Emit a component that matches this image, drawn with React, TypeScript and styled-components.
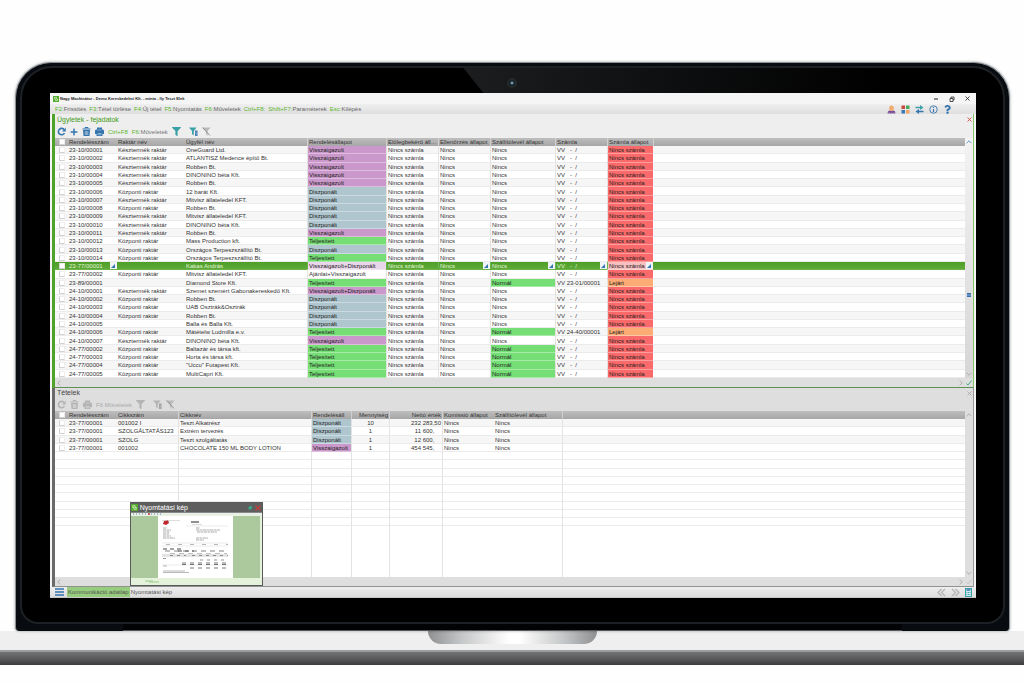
import React from "react";
import styled, { createGlobalStyle, css } from "styled-components";
import { FaPlus, FaFilter, FaQuestion } from "react-icons/fa";

const Global = createGlobalStyle`
  * { box-sizing: border-box; }
  html, body { margin: 0; background: #fefefe; }
  body { font-family: "Liberation Sans", Arial, sans-serif; font-size: 6px; line-height: 8px; color: #333; }
  button { font: inherit; color: inherit; border: 0; padding: 0; margin: 0; background: none; white-space: nowrap; }
  h2, header, footer, nav { margin: 0; }
  svg { display: block; }
`;

const colors = {
  green: "#4aa01e",
  blue: "#3576ae",
  teal: "#3aa0a8",
  grey: "#b4b4b4",
};

const Page = styled.main`
  display: flex;
  flex-direction: column;
  padding-top: 62px;
`;

const Lid = styled.div`
  position: relative;
  margin: 0 14px 0 15px;
  padding: 3px 4px 0;
  background: #080c10;
  border: 1px solid #8d9296;
  border-bottom: 0;
  border-radius: 36px 36px 4px 4px;
  box-shadow: 0 0 3px rgba(0, 0, 0, 0.35);
`;

const Bezel = styled.div`
  position: relative;
  display: flex;
  flex-direction: column;
  background: #000;
  border: 2px solid #1d2125;
  border-radius: 32px 32px 18px 18px;
  padding: 25px 27px 24px 28px;
  overflow: hidden;

  &::before {
    content: "";
    position: absolute;
    inset: 0 12% 0 45%;
    background: linear-gradient(to right, #1b1d1f, #000);
    clip-path: polygon(0 0, 100% 0, 100% 40px, 32px 40px);
  }
`;

const Camera = styled.span`
  position: absolute;
  top: 10px;
  left: 50%;
  width: 10px;
  height: 10px;
  margin-left: -6px;
  border-radius: 50%;
  border: 2px solid #25292c;
  background: radial-gradient(circle, #7690a0 0 1px, #14202a 2px);
`;

const Hinge = styled.div`
  height: 7px;
  margin: 0 103px;
  background: #020304;
  border-bottom: 1px solid #55585a;
`;

const Base = styled.div`
  display: flex;
  flex-direction: column;
  align-items: center;
  height: 34px;
  background: linear-gradient(#efefef 0 19px, #9a9c9e 19px 21px, #717375 21px, #5c5c5e 27px, #3f3b3e 34px);
`;

const Notch = styled.div`
  width: 169px;
  height: 13px;
  border-radius: 0 0 14px 14px;
  background: linear-gradient(to right, #8f9092, #c6c7c8 20%, #fff 48%, #fff 54%, #c6c7c8 80%, #8f9092);
`;

const Screen = styled.div`
  position: relative;
  display: flex;
  flex-direction: column;
  background: #f4f4f4;
  border-bottom: 1px solid #c8c8c8;
`;

const TitleBar = styled.header`
  display: flex;
  align-items: center;
  height: 11px;
  padding: 0 6px 0 3px;
  gap: 1px;
  background: #f5f5f5;
  font-size: 4px;
  font-weight: 700;
  color: #222;
`;

const WindowControls = styled.div`
  display: flex;
  gap: 10px;
  margin-left: auto;
`;

const MenuBar = styled.nav`
  display: flex;
  align-items: center;
  height: 10px;
  padding: 0 24px 0 5px;
  gap: 3px;
  background: linear-gradient(#efefef, #dedede);
  color: #666;
`;

const MenuIcons = styled.div`
  display: flex;
  gap: 5px;
  margin-left: auto;
`;

const Key = styled.span`
  color: #5cb52c;
`;

const Panel = styled.section<{ $active?: boolean }>`
  margin: 0 2px;
  display: flex;
  flex-direction: column;
  background: ${(p) => (p.$active ? "#eeeeee" : "#dedede")};
  border-left: 3px solid ${(p) => (p.$active ? "#4ea42a" : "#6a6a6a")};
  border-right: 1px solid ${(p) => (p.$active ? "#86c468" : "#999")};
  border-bottom: 1px solid ${(p) => (p.$active ? "#5f8f56" : "#8f938f")};
`;

const PanelHead = styled.div<{ $active?: boolean }>`
  display: flex;
  align-items: center;
  justify-content: space-between;
  height: ${(p) => (p.$active ? 11 : 10)}px;
  padding: 0 1px 0 2px;
`;

const PanelTitle = styled.h2<{ $active?: boolean }>`
  font-size: 7px;
  font-weight: 400;
  line-height: 10px;
  color: ${(p) => (p.$active ? "#3f9a16" : "#444")};
`;

const Tools = styled.div<{ $disabled?: boolean }>`
  display: flex;
  align-items: center;
  height: 13px;
  padding-left: 2px;
  gap: 4px;
  color: ${(p) => (p.$disabled ? "#aaa" : "#777")};
`;

const Filters = styled.div`
  display: flex;
  gap: 4px;
`;

const FilterGap = styled.span`
  width: 0;
`;

const GridArea = styled.div`
  display: flex;
`;

const Grid = styled.table<{ $height: number }>`
  flex: 1;
  width: 100%;
  min-width: 0;
  height: ${(p) => p.$height}px;
  table-layout: fixed;
  border-collapse: separate;
  border-spacing: 0;
  background: #fff;

  th {
    height: 8px;
    padding: 0 1px;
    font-weight: 400;
    text-align: left;
    color: #333;
    background: linear-gradient(#bebebe, #a6a6a6);
    white-space: nowrap;
    overflow: hidden;
    text-overflow: ellipsis;
    line-height: 8px;
  }
`;

const Row = styled.tr<{ $selected?: boolean; $striped?: boolean }>`
  background: ${(p) => (p.$selected ? "linear-gradient(#4d9f27, #62ab3b)" : p.$striped ? "#f6f6f6" : "#fff")};
  color: ${(p) => (p.$selected ? "#e2f3d8" : "#333")};
`;

const FillRow = styled.tr`
  height: 49px;
`;

const tones = {
  purple: "#cb98cb",
  blue: "#afc6cf",
  green: "#75df75",
  red: "#fa6a6a",
  orange: "#fdab75",
  lilac: "#ead6ea",
  pink: "#f8c0c0",
};
type Tone = keyof typeof tones;

const Cell = styled.td<{ $tone?: Tone; $line?: boolean; $align?: string; $selected?: boolean; $plain?: boolean }>`
  position: relative;
  padding: 1px 1px 0;
  height: 8px;
  line-height: 6px;
  white-space: nowrap;
  overflow: hidden;
  text-align: ${(p) => p.$align || "left"};
  border-bottom: ${(p) => (p.$plain ? "0" : "1px solid #ebebeb")};
  ${(p) => p.$line && css`border-left: 1px solid #e3e3e3;`}
  ${(p) => p.$selected && css`border-color: #6cb348;`}
  ${(p) => p.$tone && css`
    background: ${tones[p.$tone]};
    color: #222;
    border-bottom: 1px solid rgba(255, 255, 255, 0.35);
  `}
`;

const HeadCell = styled.th<{ $line?: boolean; $right?: boolean }>`
  && {
    text-align: ${(p) => (p.$right ? "right" : "left")};
    ${(p) => p.$line && css`border-left: 1px solid #cfcfcf;`}
  }
`;

const Check = styled.input`
  appearance: none;
  display: block;
  width: 6px;
  height: 6px;
  margin: 0 auto;
  background: #fff;
  border: 1px solid #d2d2d2;
  border-top-color: #eee;
  border-right-color: #eee;
`;

const CornerButton = styled.button`
  position: absolute;
  right: 0;
  top: 0;
  width: 7px;
  height: 8px;
  background: #eef4f8;

  &::after {
    content: "";
    position: absolute;
    right: 2px;
    bottom: 2px;
    border: 2px solid;
    border-color: transparent ${colors.blue} ${colors.blue} transparent;
  }
`;

const VScroll = styled.div<{ $active?: boolean }>`
  display: flex;
  flex: 0 0 8px;
  flex-direction: column;
  align-items: center;
  padding: 1px 0;
  background: ${(p) => (p.$active ? "linear-gradient(#f3f3f3, #d6d6d6)" : "#dedede")};
`;

const Spacer = styled.span<{ $grow: number }>`
  flex: ${(p) => p.$grow};
`;

const Thumb = styled.span`
  width: 4px;
  height: 4px;
  background: #5e92c4;
  border-top: 1px solid #3b6fa5;
  border-bottom: 1px solid #3b6fa5;
`;

const HScroll = styled.div`
  display: flex;
  align-items: center;
  justify-content: space-between;
  height: 9px;
  padding: 0 1px;
  background: #dedede;
`;

const ScrollEnd = styled.div`
  display: flex;
  gap: 2px;
`;

const TaskBar = styled.footer`
  display: flex;
  align-items: center;
  height: 10px;
  padding: 0 4px 0 5px;
  background: linear-gradient(#eeeeee, #dcdcdc);
  color: #555;
`;

const TaskTab = styled.button<{ $active?: boolean }>`
  height: 10px;
  padding: 0 1px;
  background: ${(p) => (p.$active ? "#97cb7d" : "transparent")};
`;

const ActiveTabSlot = styled.div`
  margin-left: 3px;
`;

const PreviewSlot = styled.div`
  position: relative;
`;

const TaskRight = styled.div`
  display: flex;
  align-items: center;
  gap: 5px;
  margin-left: auto;
`;

const Preview = styled.div`
  position: absolute;
  left: 0;
  bottom: 100%;
  width: 133px;
  margin-bottom: 1px;
  border: 1px solid #5a5a5a;
  background: #e4f2dc;
`;

const PreviewHead = styled.div`
  display: flex;
  align-items: center;
  height: 9px;
  gap: 2px;
  padding-right: 1px;
  background: #5e5e5e;
  color: #fff;
  font-size: 7px;
`;

const PreviewActions = styled.div`
  display: flex;
  gap: 2px;
  margin-left: auto;
`;

const PreviewTools = styled.div`
  height: 4px;
  border-top: 1px solid #888;
  padding-left: 2px;
  background: #e9f0e6;
`;

const PreviewBody = styled.div`
  display: flex;
  justify-content: center;
  height: 62px;
  margin-right: 2px;
  background: #abc99c;
`;

const PreviewFoot = styled.div`
  height: 7px;
  padding: 2px 14px;
`;

const Logo = ({ size = 6 }: { size?: number }) => (
  <svg width={size} height={size} viewBox="0 0 12 12">
    <rect width="12" height="12" fill="#55ab2f" />
    <path d="M3 3h4v3h2v3H5V6H3z" fill="none" stroke="#d9f2c8" strokeWidth="1.4" />
  </svg>
);

const Cross = ({ color, size = 5 }: { color: string; size?: number }) => (
  <svg width={size} height={size} viewBox="0 0 10 10">
    <path d="M1 1l8 8M9 1l-8 8" stroke={color} strokeWidth="1.8" />
  </svg>
);

const Chevron = ({ dir, color = "#aaa" }: { dir: "up" | "down" | "left" | "right"; color?: string }) => {
  const d = { up: "M1 7l4-4 4 4", down: "M1 3l4 4 4-4", left: "M7 1L3 5l4 4", right: "M3 1l4 4-4 4" }[dir];
  return (
    <svg width="6" height="6" viewBox="0 0 10 10">
      <path d={d} fill="none" stroke={color} strokeWidth="1.6" />
    </svg>
  );
};

const Double = ({ flip }: { flip?: boolean }) => (
  <svg width="9" height="9" viewBox="0 0 18 18">
    <path
      d={flip ? "M2 2l7 7-7 7M9 2l7 7-7 7" : "M9 2L2 9l7 7M16 2L9 9l7 7"}
      fill="none"
      stroke="#b3b3b3"
      strokeWidth="2.6"
    />
  </svg>
);

const Refresh = ({ color }: { color: string }) => (
  <svg width="9" height="9" viewBox="0 0 18 18">
    <path d="M14.5 5.5A6.4 6.4 0 1 0 15 12" fill="none" stroke={color} strokeWidth="3.2" />
    <path d="M17.5 1.5v7.5h-7.5z" fill={color} />
  </svg>
);

const Trash = ({ color }: { color: string }) => (
  <svg width="9" height="9" viewBox="0 0 18 18">
    <path d="M1 4h16M6 3V1h6v2" fill="none" stroke={color} strokeWidth="2" />
    <path d="M2 6h14l-1 12H3z" fill={color} />
    <path d="M6.500 8v8M9 8v8M11.500 8v8" stroke="#eee" strokeWidth="1" />
  </svg>
);

const Printer = ({ color }: { color: string }) => (
  <svg width="9" height="9" viewBox="0 0 18 18">
    <path d="M4 1h10v4h2l2 2v7h-3v4H3v-4H0V7l2-2h2z" fill={color} />
    <path d="M5 6h8M5 13h8M5 15.500h8" stroke="#dfe8ee" strokeWidth="1" />
  </svg>
);

const FilterList = ({ color, bar }: { color: string; bar: string }) => (
  <svg width="9" height="9" viewBox="0 0 18 18">
    <path d="M0 1h15l-5.5 7v9L6 14V8z" fill={color} />
    <path d="M12 7h5v11h-5z" fill={bar} />
    <path d="M13 10h3M13 13h3M13 16h3" stroke="#eee" strokeWidth="0.8" />
  </svg>
);

const FilterOff = () => (
  <svg width="9" height="9" viewBox="0 0 18 18">
    <path d="M1 1h16l-6 7v10L8 14V8z" fill="#b9b9b9" />
    <path d="M1 1l15 16" stroke="#8e8e8e" strokeWidth="2" />
  </svg>
);

const Person = () => (
  <svg width="9" height="9" viewBox="0 0 18 18">
    <path d="M1 17c0-5 3-6 8-6s8 1 8 6z" fill="#8d5fa8" />
    <rect x="4.500" y="1" width="9" height="11" rx="4" fill="#f0ab70" />
    <path d="M2 14l3-2 2 3 2-3 2 3 2-3 3 2" fill="none" stroke="#5f3f80" strokeWidth="1" />
  </svg>
);

const Squares = () => (
  <svg width="9" height="9" viewBox="0 0 18 18">
    <rect x="1" y="1" width="7" height="7" fill="#c9473f" />
    <rect x="10" y="1" width="7" height="7" fill="#46a85c" />
    <rect x="1" y="10" width="7" height="7" fill="#3a78b4" />
    <rect x="10" y="10" width="7" height="7" fill="#f0a468" />
  </svg>
);

const Arrows = () => (
  <svg width="9" height="9" viewBox="0 0 18 18">
    <path d="M1 3.500h9V0l7 5-7 5V6.500H1z" fill={colors.teal} />
    <path d="M17 11.500H8V8l-7 5 7 5v-3.500h9z" fill={colors.blue} />
  </svg>
);

const Info = () => (
  <svg width="9" height="9" viewBox="0 0 18 18">
    <circle cx="9" cy="9" r="7.500" fill="none" stroke={colors.blue} strokeWidth="1.8" />
    <path d="M9 4v2M9 8v6" stroke={colors.blue} strokeWidth="2.4" />
  </svg>
);

const Burger = () => (
  <svg width="9" height="8" viewBox="0 0 9 8">
    <path d="M0 1h9M0 4h9M0 7h9" stroke={colors.blue} strokeWidth="1.6" />
  </svg>
);

const Calculator = () => (
  <svg width="7" height="9" viewBox="0 0 14 18">
    <rect x="1" y="1" width="12" height="16" fill="#d4ecef" stroke={colors.teal} strokeWidth="2" />
    <path d="M3 4h8" stroke={colors.blue} strokeWidth="3" />
    <path d="M3 9h8M3 13h8" stroke={colors.teal} strokeWidth="2" strokeDasharray="2 1" />
  </svg>
);

const Paper = () => (
  <svg width="75" height="62" viewBox="0 0 75 62">
    <rect width="75" height="62" fill="#fff" />
    <path d="M6 5l4 -1 1 3-3 2-3-1z" fill="#c0282d" />
    <path d="M4 4.500h18M34 8.500h10" stroke="#bbb" strokeWidth="0.500" />
    <path d="M33 6h8" stroke="#222" strokeWidth="1.200" />
    <path d="M28 10h42M4 27h66M4 30h66M4 49h66" stroke="#ccc" strokeWidth="0.400" />
    <path d="M5 12h4M5 14h8M5 16h7M5 18h6M5 20h8M5 22h12M38 12h4M38 14h24M39 16h20M38 22h12M38 24h8" stroke="#888" strokeWidth="0.700" strokeDasharray="3 0.500" />
    <path d="M8 28.500h62" stroke="#999" strokeWidth="0.700" strokeDasharray="4 8" />
    <path d="M5 33h20M20 35h16" stroke="#333" strokeWidth="0.900" strokeDasharray="4 3" />
    <path d="M7 35h62M12 38h57" stroke="#666" strokeWidth="0.800" strokeDasharray="5 4" />
    <rect x="4" y="38" width="66" height="3" fill="#e5e5e5" />
    <path d="M12 39.500h16M34 39.500h36M5 42.500h4M42 44h28" stroke="#666" strokeWidth="0.700" strokeDasharray="3 4" />
    <path d="M24 47h45M24 48.500h45M32 52h38" stroke="#555" strokeWidth="0.800" strokeDasharray="4 4" />
    <path d="M5 50h4M5 55h22M5 56.500h26" stroke="#888" strokeWidth="0.600" />
  </svg>
);

const menu: [string, string][] = [
  ["F2:", "Frissítés"],
  ["F3:", "Tétel törlése"],
  ["F4:", "Új tétel"],
  ["F5:", "Nyomtatás"],
  ["F6:", "Műveletek"],
  ["Ctrl+F8:", ""],
  ["Shift+F7:", "Paraméterek"],
  ["Esc:", "Kilépés"],
];

const K = "Központi raktár";
const KT = "Késztermék raktár";
const V = "Visszaigazolt";
const D = "Diszponált";
const T = "Teljesített";
const VD = "Visszaigazolt+Diszponált";

type Order = { id: string; store: string; client: string; state: string; invoice?: string; selected?: boolean };
const order = (id: string, store: string, client: string, state: string, invoice?: string): Order => ({
  id, store, client, state, invoice,
});

const orders: Order[] = [
  order("23-10/00001", KT, "OneGuard Ltd.", V),
  order("23-10/00002", KT, "ATLANTISZ Medence építő Bt.", V),
  order("23-10/00003", KT, "Robben Bt.", V),
  order("23-10/00004", KT, "DINONINO béta Kft.", V),
  order("23-10/00005", KT, "Robben Bt.", V),
  order("23-10/00006", K, "12 barát Kft.", D),
  order("23-10/00007", KT, "Mitvisz állateledel KFT.", D),
  order("23-10/00008", K, "Robben Bt.", D),
  order("23-10/00009", KT, "Mitvisz állateledel KFT.", D),
  order("23-10/00010", KT, "DINONINO béta Kft.", D),
  order("23-10/00011", KT, "Robben Bt.", V),
  order("23-10/00012", K, "Mass Production kft.", T),
  order("23-10/00013", K, "Országos Terpeszszállító Bt.", D),
  order("23-10/00014", K, "Országos Terpeszszállító Bt.", T),
  { ...order("23-77/00001", "", "Kakas András", VD), selected: true },
  order("23-77/00002", K, "Mitvisz állateledel KFT.", "Ajánlat+Visszaigazolt"),
  order("23-89/00001", "", "Diamond Store Kft.", T, "VV 23-01/00001"),
  order("24-10/00001", KT, "Szemet szemért Gabonakereskedő Kft.", VD),
  order("24-10/00002", K, "Robben Bt.", D),
  order("24-10/00003", K, "UAB Osztrák&Osztrák", D),
  order("24-10/00004", K, "Robben Bt.", D),
  order("24-10/00005", "", "Balla és Balla Kft.", D),
  order("24-10/00006", K, "Mátételw Ludmilla e.v.", T, "VV 24-40/00001"),
  order("24-10/00007", KT, "DINONINO béta Kft.", V),
  order("24-77/00002", K, "Baltazár és társa kft.", T),
  order("24-77/00003", K, "Horta és társa kft.", T),
  order("24-77/00004", K, "\"Uccu\" Futapest Kft.", T),
  order("24-77/00005", K, "MultiCapri Kft.", T),
];

const toneOf = (state: string): Tone | undefined =>
  state === V || state === VD ? "purple" : state === D ? "blue" : state === T ? "green" : undefined;

const orderHeads = [
  "Rendelésszám", "Raktár név", "Ügyfél név", "Rendelésállapot", "Előlegbekérő állapot",
  "Ellenőrzés állapot", "Szállítólevél állapot", "Számla", "Számla állapot",
];
const orderWidths = [13, 49, 68, 122, 79, 52, 52, 65, 52, 46];

const items = [
  ["23-77/00001", "001002 I", "Teszt Alkatrész", D, "10", "232 283,50"],
  ["23-77/00001", "SZOLGÁLTATÁS123", "Extrém tervezés", D, "1", "11 600,\u2007\u2007"],
  ["23-77/00001", "SZOLG", "Teszt szolgáltatás", D, "1", "12 600,\u2007\u2007"],
  ["23-77/00001", "001002", "CHOCOLATE 150 ML BODY LOTION", V, "1", "454 545,\u2007\u2007"],
];
const itemHeads = ["Rendelésszám", "Cikkszám", "Cikknév", "Rendelésáll", "Mennyiség", "Nettó érték", "Komissió állapot", "Szállítólevél állapot"];
const itemWidths = [13, 49, 61, 133, 40, 38, 53, 52, 68];
const blankRows = Array.from({ length: 9 }, (_, i) => i);

const Columns = ({ widths }: { widths: number[] }) => (
  <colgroup>
    {widths.map((w, i) => <col key={i} width={w} />)}
    <col />
  </colgroup>
);

function OrderRow({ o, striped }: { o: Order; striped: boolean }) {
  const s = o.selected;
  const delivered = o.state === T && (o.invoice || o.id.startsWith("24"));
  return (
    <Row $selected={s} $striped={striped}>
      <Cell $selected={s}><Check type="checkbox" aria-label={o.id} /></Cell>
      <Cell $selected={s}>{o.id}{s && <CornerButton aria-label="Megnyitás" />}</Cell>
      <Cell $selected={s}>{o.store}</Cell>
      <Cell $selected={s}>{o.client}</Cell>
      <Cell $line $selected={s} $tone={s ? "lilac" : toneOf(o.state)}>{o.state}</Cell>
      <Cell $line $selected={s}>Nincs számla</Cell>
      <Cell $line $selected={s}>Nincs{s && <CornerButton aria-label="Megnyitás" />}</Cell>
      <Cell $line $selected={s} $tone={delivered ? "green" : undefined}>
        {delivered ? "Normál" : "Nincs"}{s && <CornerButton aria-label="Megnyitás" />}
      </Cell>
      <Cell $line $selected={s}>{o.invoice || "VV\u00a0\u00a0 -\u00a0 /"}{s && <CornerButton aria-label="Megnyitás" />}</Cell>
      <Cell $line $selected={s} $tone={s ? "pink" : o.invoice ? "orange" : "red"}>
        {o.invoice ? "Lejárt" : "Nincs számla"}{s && <CornerButton aria-label="Megnyitás" />}
      </Cell>
      <Cell $selected={s} />
    </Row>
  );
}

export default function App() {
  return (
    <>
      <Global />
      <Page>
        <Lid>
          <Bezel>
            <Camera />
            <Screen>
              <TitleBar>
                <Logo />
                <span>Nagy Machinátor - Demo Kereskedelmi Kft. - minta - Ily Teszt Elek</span>
                <WindowControls>
                  <button aria-label="Kis méret"><svg width="6" height="6" viewBox="0 0 12 12"><path d="M2 6h8" stroke="#222" strokeWidth="2" /></svg></button>
                  <button aria-label="Előző méret"><svg width="6" height="6" viewBox="0 0 12 12"><path d="M2 5h6v6H2zM4 5V2h6v6H8" fill="none" stroke="#222" strokeWidth="1.5" /></svg></button>
                  <button aria-label="Bezárás"><Cross color="#333" /></button>
                </WindowControls>
              </TitleBar>
              <MenuBar>
                {menu.map(([key, label]) => (
                  <button key={key}><Key>{key}</Key>{label}</button>
                ))}
                <MenuIcons>
                  <button aria-label="Felhasználó"><Person /></button>
                  <button aria-label="Modulok"><Squares /></button>
                  <button aria-label="Csere"><Arrows /></button>
                  <button aria-label="Információ"><Info /></button>
                  <button aria-label="Súgó"><FaQuestion size={9} color={colors.blue} /></button>
                </MenuIcons>
              </MenuBar>

              <Panel $active>
                <PanelHead $active>
                  <PanelTitle $active>Ügyletek - fejadatok</PanelTitle>
                  <button aria-label="Panel bezárása"><Cross color="#d0453a" /></button>
                </PanelHead>
                <Tools>
                  <button aria-label="Frissítés"><Refresh color={colors.blue} /></button>
                  <button aria-label="Új"><FaPlus size={8} color={colors.blue} /></button>
                  <button aria-label="Törlés"><Trash color={colors.blue} /></button>
                  <button aria-label="Nyomtatás"><Printer color={colors.blue} /></button>
                  <button><Key>Ctrl+F8</Key></button>
                  <button><Key>F6:</Key>Műveletek</button>
                  <Filters>
                    <button aria-label="Szűrő"><FaFilter size={9} color={colors.teal} /></button>
                    <FilterGap />
                    <button aria-label="Szűrő lista"><FilterList color={colors.teal} bar={colors.blue} /></button>
                    <button aria-label="Szűrő törlése"><FilterOff /></button>
                  </Filters>
                </Tools>
                <GridArea>
                  <Grid $height={240}>
                    <Columns widths={orderWidths} />
                    <thead>
                      <tr>
                        <HeadCell><Check type="checkbox" aria-label="Mind" /></HeadCell>
                        {orderHeads.map((h, i) => <HeadCell key={h} $line={i > 2}>{h}</HeadCell>)}
                        <HeadCell $line />
                      </tr>
                    </thead>
                    <tbody>
                      {orders.map((o, i) => <OrderRow key={o.id} o={o} striped={i % 2 === 0} />)}
                    </tbody>
                  </Grid>
                  <VScroll $active>
                    <Chevron dir="up" color="#5e92c4" />
                    <Spacer $grow={2} />
                    <Thumb />
                    <Spacer $grow={1} />
                    <Chevron dir="down" />
                  </VScroll>
                </GridArea>
                <HScroll>
                  <Chevron dir="left" />
                  <ScrollEnd>
                    <Chevron dir="right" />
                    <svg width="6" height="6" viewBox="0 0 12 12"><path d="M1 7l3 3 7-9" fill="none" stroke="#3fae7c" strokeWidth="2" /></svg>
                  </ScrollEnd>
                </HScroll>
              </Panel>

              <Panel>
                <PanelHead>
                  <PanelTitle>Tételek</PanelTitle>
                  <button aria-label="Panel bezárása"><Cross color="#aaa" /></button>
                </PanelHead>
                <Tools $disabled>
                  <button aria-label="Frissítés"><Refresh color={colors.grey} /></button>
                  <button aria-label="Törlés"><Trash color={colors.grey} /></button>
                  <button aria-label="Nyomtatás"><Printer color={colors.grey} /></button>
                  <button>F6 Műveletek</button>
                  <Filters>
                    <button aria-label="Szűrő"><FaFilter size={9} color={colors.grey} /></button>
                    <FilterGap />
                    <button aria-label="Szűrő lista"><FilterList color={colors.grey} bar="#999" /></button>
                    <button aria-label="Szűrő törlése"><FilterOff /></button>
                  </Filters>
                </Tools>
                <GridArea>
                  <Grid $height={166}>
                    <Columns widths={itemWidths} />
                    <thead>
                      <tr>
                        <HeadCell><Check type="checkbox" aria-label="Mind" /></HeadCell>
                        {itemHeads.map((h, i) => (
                          <HeadCell key={h} $line={i > 1 && i < 7} $right={i === 4 || i === 5}>{h}</HeadCell>
                        ))}
                        <HeadCell $line />
                      </tr>
                    </thead>
                    <tbody>
                      {items.map((r, i) => (
                        <Row key={i} $striped={i % 2 === 0}>
                          <Cell><Check type="checkbox" aria-label={r[2]} /></Cell>
                          <Cell>{r[0]}</Cell>
                          <Cell>{r[1]}</Cell>
                          <Cell $line>{r[2]}</Cell>
                          <Cell $line $tone={toneOf(r[3])}>{r[3]}</Cell>
                          <Cell $line $align="center">{r[4]}</Cell>
                          <Cell $line $align="right">{r[5]}</Cell>
                          <Cell $line>Nincs</Cell>
                          <Cell>Nincs</Cell>
                          <Cell $line />
                        </Row>
                      ))}
                      {blankRows.map((n) => (
                        <Row key={n}>
                          {[0, 1, 2, 3, 4, 5, 6, 7, 8, 9].map((c) => <Cell key={c} $line={c > 2 && c !== 8} />)}
                        </Row>
                      ))}
                      <FillRow>
                        {[0, 1, 2, 3, 4, 5, 6, 7, 8, 9].map((c) => <Cell key={c} $plain $line={c > 2 && c !== 8} />)}
                      </FillRow>
                    </tbody>
                  </Grid>
                  <VScroll>
                    <Chevron dir="up" />
                    <Spacer $grow={1} />
                    <Chevron dir="down" />
                  </VScroll>
                </GridArea>
                <HScroll>
                  <Chevron dir="left" />
                  <ScrollEnd>
                    <Chevron dir="right" />
                    <svg width="6" height="6" viewBox="0 0 12 12"><path d="M1 7l3 3 7-9" fill="none" stroke="#c4c4c4" strokeWidth="2" /></svg>
                  </ScrollEnd>
                </HScroll>
              </Panel>

              <TaskBar>
                <button aria-label="Menü"><Burger /></button>
                <ActiveTabSlot><TaskTab $active>Kommunikáció adatlap</TaskTab></ActiveTabSlot>
                <PreviewSlot>
                  <TaskTab>Nyomtatási kép</TaskTab>
                  <Preview>
                    <PreviewHead>
                      <Logo size={7} />
                      <span>Nyomtatási kép</span>
                      <PreviewActions>
                        <svg width="6" height="6" viewBox="0 0 12 12"><path d="M7 1l4 4-2 1-2 4-2-2-4 3 3-4-2-2 4-2z" fill="#35b08a" /></svg>
                        <Cross color="#d63a34" size={6} />
                      </PreviewActions>
                    </PreviewHead>
                    <PreviewTools>
                      <svg width="60" height="2" viewBox="0 0 60 2">
                        <path d="M0 1h30" stroke="#5b86b5" strokeWidth="1" strokeDasharray="1 2" />
                        <path d="M15 1h2" stroke="#d33" strokeWidth="1.500" />
                      </svg>
                    </PreviewTools>
                    <PreviewBody><Paper /></PreviewBody>
                    <PreviewFoot>
                      <svg width="16" height="3" viewBox="0 0 16 3"><path d="M0 1h8M4 2h10" stroke="#9ccb88" strokeWidth="1" /></svg>
                    </PreviewFoot>
                  </Preview>
                </PreviewSlot>
                <TaskRight>
                  <button aria-label="Előző"><Double /></button>
                  <button aria-label="Következő"><Double flip /></button>
                  <button aria-label="Számológép"><Calculator /></button>
                </TaskRight>
              </TaskBar>
            </Screen>
          </Bezel>
          <Hinge />
        </Lid>
        <Base><Notch /></Base>
      </Page>
    </>
  );
}
